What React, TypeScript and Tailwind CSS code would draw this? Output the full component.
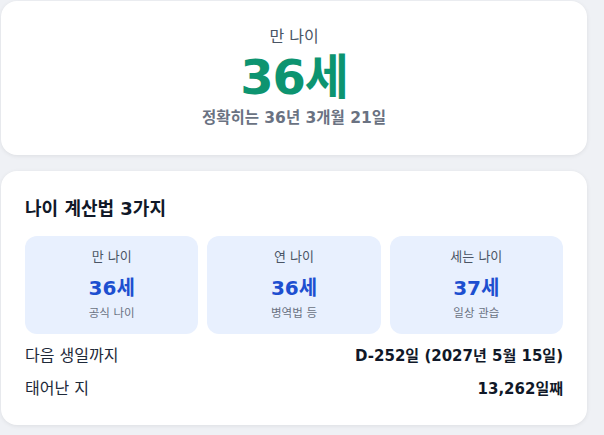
const methods = [
  { label: "만 나이", value: "36세", note: "공식 나이" },
  { label: "연 나이", value: "36세", note: "병역법 등" },
  { label: "세는 나이", value: "37세", note: "일상 관습" },
];

const rows = [
  { label: "다음 생일까지", value: "D-252일 (2027년 5월 15일)" },
  { label: "태어난 지", value: "13,262일째" },
];

export default function App() {
  return (
    <div
      className="min-h-[435px] bg-[#eff1f5] pl-px pt-px"
      style={{ fontFamily: '"DejaVu Sans", "Noto Sans CJK KR", sans-serif' }}
    >
      <div className="flex w-[586px] flex-col gap-4">
        <section className="flex flex-col items-center rounded-2xl bg-white pt-6 pb-[25px] shadow-[0_1px_4px_rgba(0,0,0,0.08)]">
          <p className="text-base leading-6 text-gray-600">만 나이</p>
          <p className="mt-1 text-5xl leading-none font-bold tracking-tight text-[#0d9470]">36세</p>
          <p className="mt-[5px] text-[15.5px] leading-6 font-bold text-gray-500">정확히는 36년 3개월 21일</p>
        </section>

        <section className="rounded-2xl bg-white px-6 pt-6 pb-6 shadow-[0_1px_4px_rgba(0,0,0,0.08)]">
          <h2 className="text-lg leading-7 font-bold text-gray-900">나이 계산법 3가지</h2>
          <div className="mt-[13px] grid grid-cols-3 gap-[9px]">
            {methods.map((m) => (
              <div key={m.label} className="flex flex-col items-center rounded-xl bg-[#e8f0fe] pt-3 pb-[13px]">
                <span className="text-[13px] leading-[18px] text-gray-600">{m.label}</span>
                <span className="mt-2 text-xl leading-7 font-bold text-[#1d4fd0]">{m.value}</span>
                <span className="mt-[3px] text-[11.5px] leading-4 text-gray-500">{m.note}</span>
              </div>
            ))}
          </div>
          <div className="mt-2.5 flex flex-col gap-[9px]">
            {rows.map((r) => (
              <div key={r.label} className="flex items-center justify-between leading-6">
                <span className="text-base text-gray-800">{r.label}</span>
                <span className="text-[15px] font-bold text-gray-900">{r.value}</span>
              </div>
            ))}
          </div>
        </section>
      </div>
    </div>
  );
}
